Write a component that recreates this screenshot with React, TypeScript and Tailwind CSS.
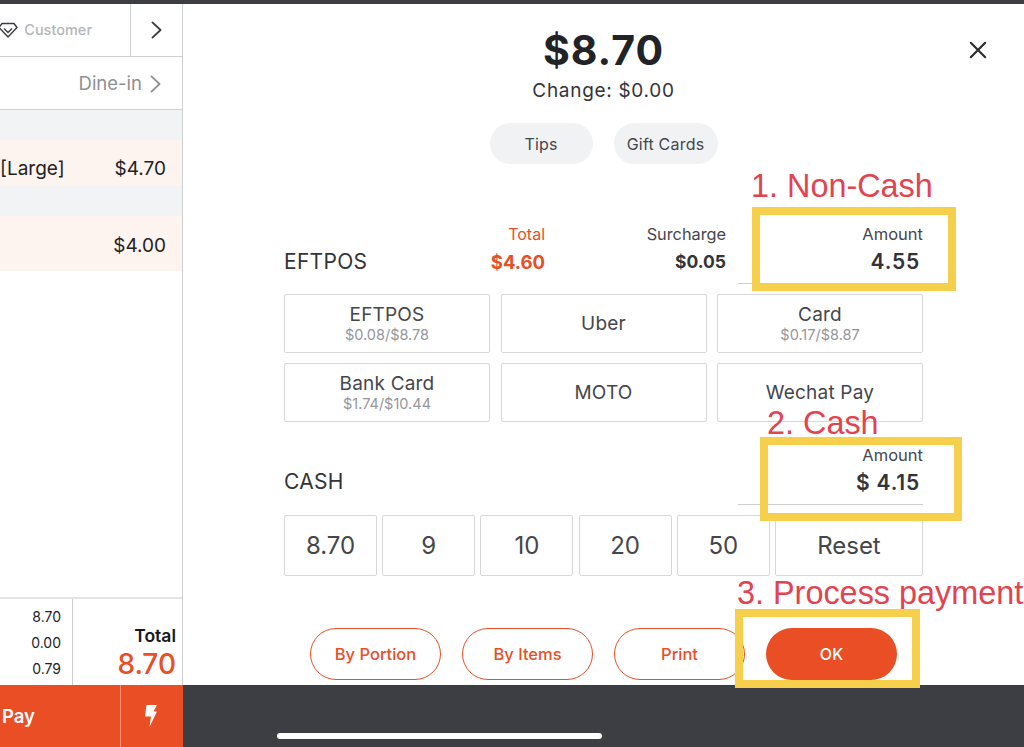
import React from "react";

const sans = "font-['Inter','Liberation_Sans',sans-serif]";

function Chevron({ className }: { className: string }) {
  return (
    <svg viewBox="0 0 12 20" className={className} fill="none" stroke="currentColor" strokeWidth="2" strokeLinecap="round" strokeLinejoin="round">
      <path d="M1.5 1.5l9 8.5-9 8.5" />
    </svg>
  );
}

function PayButton({ title, sub }: { title: string; sub?: string }) {
  return (
    <div className="flex h-[59px] flex-col items-center justify-center rounded-[2px] border border-[#d8d8da] text-[#45464b]">
      <div className="text-[19px] leading-[20px] tracking-[0.2px]">{title}</div>
      {sub && <div className="mt-[2px] text-[14.5px] leading-[16px] text-[#95969a]">{sub}</div>}
    </div>
  );
}

function CashButton({ label, className }: { label: string; className: string }) {
  return (
    <div className={`flex h-[61px] items-center justify-center rounded-[2px] border border-[#d8d8da] text-[24px] text-[#45464b] ${className}`}>
      {label}
    </div>
  );
}

function Outline({ label }: { label: string }) {
  return (
    <div className="flex h-[52px] w-[131px] items-center justify-center rounded-full border border-[#ea4e24] text-[16.5px] font-medium text-[#ea4e24]">
      {label}
    </div>
  );
}

function Note({ text, className }: { text: string; className: string }) {
  return <div className={`absolute font-['Liberation_Sans',sans-serif] text-[32.4px] leading-[38px] whitespace-nowrap text-[#e2434f] ${className}`}>{text}</div>;
}

function Frame({ className }: { className: string }) {
  return <div className={`absolute border-[8px] border-[#f6d04d] ${className}`} />;
}

export default function App() {
  return (
    <div className={`${sans} relative flex h-[747px] w-[1024px] flex-col overflow-hidden bg-white`}>
      <div className="h-[4px] bg-[#3c3e44]" />
      <div className="flex min-h-0 flex-1">
        <aside className="flex w-[183px] flex-col border-r border-[#cfd0d2]">
          <div className="flex h-[53px] border-b border-[#cfd0d2]">
            <div className="flex flex-1 items-center justify-end gap-[6px] pr-[38px] text-[14.5px] font-medium text-[#b5b6b9]">
              <svg viewBox="0 0 20 16" className="ml-[-12px] h-[16px] w-[20px] shrink-0 text-[#3a3b40]" fill="none" stroke="currentColor" strokeWidth="1.4" strokeLinejoin="round">
                <path d="M4 1.5h12l3 4-9 9.5-9-9.5z" />
                <path d="M6 6.5l4 4 4-4" />
              </svg>
              Customer
            </div>
            <div className="flex w-[52px] items-center justify-center border-l border-[#cfd0d2] text-[#3a3b40]">
              <Chevron className="h-[18px] w-[11px]" />
            </div>
          </div>
          <div className="flex h-[53px] items-center justify-end gap-[8px] border-b border-[#cfd0d2] pt-[1px] pr-[21px] text-[18.5px] text-[#8f9094]">
            Dine-in
            <Chevron className="h-[18px] w-[11px]" />
          </div>
          <div className="h-[30px] bg-[#f2f3f5]" />
          <div className="flex h-[46px] items-center justify-between bg-[#fdf3ef] pt-[13px] pr-[16px] text-[#222327]">
            <span className="text-[19px]">[Large]</span>
            <span className="text-[19px]">$4.70</span>
          </div>
          <div className="h-[30px] bg-[#f2f3f5]" />
          <div className="flex h-[55px] items-center justify-end bg-[#fdf3ef] pt-[6px] pr-[16px] text-[19px] text-[#222327]">$4.00</div>
          <div className="flex-1" />
          <div className="flex h-[88px] border-t-2 border-[#e4e4e6]">
            <div className="flex w-[72px] flex-col items-end justify-center gap-[6px] pt-[2px] pr-[11px] text-[14px] text-[#222327]">
              <div className="leading-[20px]">8.70</div>
              <div className="leading-[20px]">0.00</div>
              <div className="leading-[20px]">0.79</div>
            </div>
            <div className="flex flex-1 flex-col items-end justify-end border-l border-[#cfd0d2] pr-[6px] pb-[4px]">
              <div className="text-[17.5px] leading-[22px] font-semibold text-[#18191c]">Total</div>
              <div className="text-[28px] leading-[34px] font-medium text-[#ea4e24]">8.70</div>
            </div>
          </div>
        </aside>

        <main className="relative flex flex-1 flex-col items-center text-[#45464b]">
          <div className="mt-[22px] text-[41px] leading-[48px] font-bold tracking-[1px] text-[#222327]">$8.70</div>
          <div className="mt-[4px] text-[19px] leading-[26px] tracking-[0.7px] text-[#333438]">Change: $0.00</div>
          <div className="mt-[19px] flex gap-[21px] text-[16px] tracking-[0.2px]">
            <div className="flex h-[41px] w-[103px] items-center justify-center rounded-full bg-[#f1f2f4]">Tips</div>
            <div className="flex h-[41px] w-[104px] items-center justify-center rounded-full bg-[#f1f2f4]">Gift Cards</div>
          </div>

          <div className="mt-[59px] flex w-[639px] flex-col">
            <div className="flex h-[61px]">
              <div className="flex w-[207px] items-end pb-[7px] text-[21px] tracking-[0.3px] text-[#333438]">EFTPOS</div>
              <div className="flex w-[54px] flex-col items-end pt-[1px]">
                <div className="text-[16px] leading-[20px] text-[#ea4e24]">Total</div>
                <div className="mt-[7px] text-[18.5px] leading-[22px] font-bold whitespace-nowrap text-[#ea4e24]">$4.60</div>
              </div>
              <div className="flex w-[181px] flex-col items-end pt-[1px]">
                <div className="text-[16.3px] leading-[20px] text-[#45464b]">Surcharge</div>
                <div className="mt-[7px] text-[17.5px] leading-[22px] font-bold text-[#333438]">$0.05</div>
              </div>
              <div className="ml-[12px] flex flex-1 flex-col items-end border-b border-[#cfd0d2] pt-[1px]">
                <div className="text-[16.5px] leading-[20px]">Amount</div>
                <div className="mt-[5px] pr-[3px] text-[21px] leading-[26px] font-semibold tracking-[0.8px] text-[#333438]">4.55</div>
              </div>
            </div>
            <div className="mt-[10px] grid grid-cols-3 gap-x-[10.5px] gap-y-[10px]">
              <PayButton title="EFTPOS" sub="$0.08/$8.78" />
              <PayButton title="Uber" />
              <PayButton title="Card" sub="$0.17/$8.87" />
              <PayButton title="Bank Card" sub="$1.74/$10.44" />
              <PayButton title="MOTO" />
              <PayButton title="Wechat Pay" />
            </div>

            <div className="mt-[23px] flex h-[60px]">
              <div className="flex w-[454px] items-end pb-[8px] text-[21px] tracking-[0.3px] text-[#333438]">CASH</div>
              <div className="flex flex-1 flex-col items-end border-b border-[#cfd0d2]">
                <div className="text-[16.5px] leading-[20px]">Amount</div>
                <div className="mt-[5px] pr-[3px] text-[21px] leading-[26px] font-semibold tracking-[0.8px] whitespace-pre text-[#333438]">$ 4.15</div>
              </div>
            </div>
            <div className="mt-[10px] flex justify-between">
              <CashButton label="8.70" className="w-[93px]" />
              <CashButton label="9" className="w-[93px]" />
              <CashButton label="10" className="w-[93px]" />
              <CashButton label="20" className="w-[93px]" />
              <CashButton label="50" className="w-[93px]" />
              <CashButton label="Reset" className="w-[148px]" />
            </div>
          </div>

          <div className="mt-[52px] flex gap-[21px]">
            <Outline label="By Portion" />
            <Outline label="By Items" />
            <Outline label="Print" />
            <div className="flex h-[52px] w-[131px] items-center justify-center rounded-full bg-[#ea4e24] text-[16px] font-medium text-white">OK</div>
          </div>

          <div className="absolute top-[37px] right-[37px] text-[#2a2b2f]">
            <svg viewBox="0 0 20 20" className="h-[18px] w-[18px]" fill="none" stroke="currentColor" strokeWidth="2.4" strokeLinecap="round">
              <path d="M2 2l16 16M18 2L2 18" />
            </svg>
          </div>
        </main>
      </div>

      <div className="flex h-[62px] bg-[#3c3e44]">
        <div className="flex w-[183px] bg-[#ea4e24] text-white">
          <div className="flex w-[120px] items-center pl-[2px] pt-[1px] text-[18.5px] font-semibold">Pay</div>
          <div className="flex flex-1 items-center justify-center border-l border-[#f58f70] pr-[2px]">
            <svg viewBox="0 0 12 22" className="h-[22px] w-[12px]" fill="currentColor">
              <path d="M1.5 0H12L8.5 6.5H12L4.5 22 6 11.5H0z" />
            </svg>
          </div>
        </div>
      </div>

      <div className="absolute top-[733px] left-[277px] h-[6px] w-[325px] rounded-full bg-white" />

      <Note text="1. Non-Cash" className="top-[167px] left-[751px]" />
      <Frame className="top-[207px] left-[752px] h-[84px] w-[204px]" />
      <Note text="2. Cash" className="top-[404px] left-[767px]" />
      <Frame className="top-[437px] left-[760px] h-[84px] w-[202px]" />
      <Note text="3. Process payment" className="top-[574px] left-[737px]" />
      <Frame className="top-[609px] left-[735px] h-[79px] w-[185px]" />
    </div>
  );
}
